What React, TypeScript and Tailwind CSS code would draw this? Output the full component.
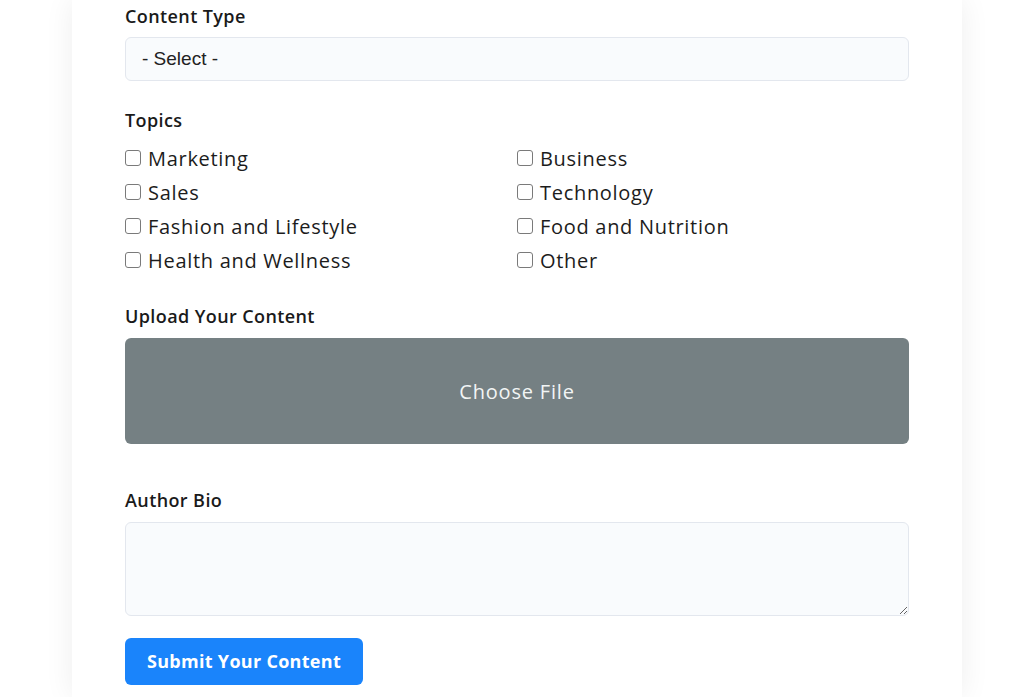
import { useState } from 'react';

const topics = [
  'Marketing',
  'Business',
  'Sales',
  'Technology',
  'Fashion and Lifestyle',
  'Food and Nutrition',
  'Health and Wellness',
  'Other',
];

function FieldLabel({ children, className = '' }: { children: React.ReactNode; className?: string }) {
  return (
    <label className={`block text-[18px] leading-6 font-semibold tracking-[0.4px] text-[#1a1a1a] ${className}`}>
      {children}
    </label>
  );
}

export default function App() {
  const [checked, setChecked] = useState<string[]>([]);
  const [fileName, setFileName] = useState('');

  const toggleTopic = (topic: string) => {
    setChecked((prev) => (prev.includes(topic) ? prev.filter((t) => t !== topic) : [...prev, topic]));
  };

  return (
    <div className="min-h-screen bg-white font-['Open_Sans','Noto_Sans',sans-serif]">
      <div className="ml-[72px] w-[890px] bg-white shadow-[0_0_28px_rgba(0,0,0,0.07)] px-[53px] pt-1 pb-3">
        {/* content type */}
        <FieldLabel className="mb-[9px]">Content Type</FieldLabel>
        <select className="w-full h-[44px] rounded-md border border-[#e3e7ee] bg-[#f9fbfd] pl-4 text-[19px] text-[#222] font-['Liberation_Sans',Arial,sans-serif] appearance-none outline-none">
          <option>- Select -</option>
          <option>Article</option>
          <option>Video</option>
          <option>Podcast</option>
        </select>

        {/* topics */}
        <FieldLabel className="mt-[27px] mb-[9px]">Topics</FieldLabel>
        <div className="grid grid-cols-2">
          {topics.map((topic) => (
            <label key={topic} className="flex items-center h-[34px] cursor-pointer">
              <input
                type="checkbox"
                checked={checked.includes(topic)}
                onChange={() => toggleTopic(topic)}
                className="appearance-none w-4 h-4 rounded-[3px] border border-[#7a7a7a] bg-white checked:bg-[#1a84fb] checked:border-[#1a84fb] mr-[7px] shrink-0"
              />
              <span className="text-[20px] text-[#1c1c1c] tracking-[0.7px] pt-[2px]">{topic}</span>
            </label>
          ))}
        </div>

        {/* upload */}
        <FieldLabel className="mt-[27px] mb-[10px]">Upload Your Content</FieldLabel>
        <label className="flex items-center justify-center w-full h-[106px] rounded-md bg-[#758083] cursor-pointer">
          <input
            type="file"
            className="hidden"
            onChange={(e) => setFileName(e.target.files?.[0]?.name ?? '')}
          />
          <span className="text-[20px] text-[#f2f5f5] tracking-[0.8px] pt-[2px]">{fileName || 'Choose File'}</span>
        </label>

        {/* author bio */}
        <FieldLabel className="mt-[44px] mb-[10px]">Author Bio</FieldLabel>
        <textarea className="block w-full h-[94px] rounded-md border border-[#e3e7ee] bg-[#f9fbfd] p-3 outline-none" />

        <button className="mt-[22px] h-[47px] w-[238px] rounded-md bg-[#1a84fb] text-white text-[18px] font-bold tracking-[0.3px]">
          Submit Your Content
        </button>
      </div>
    </div>
  );
}
